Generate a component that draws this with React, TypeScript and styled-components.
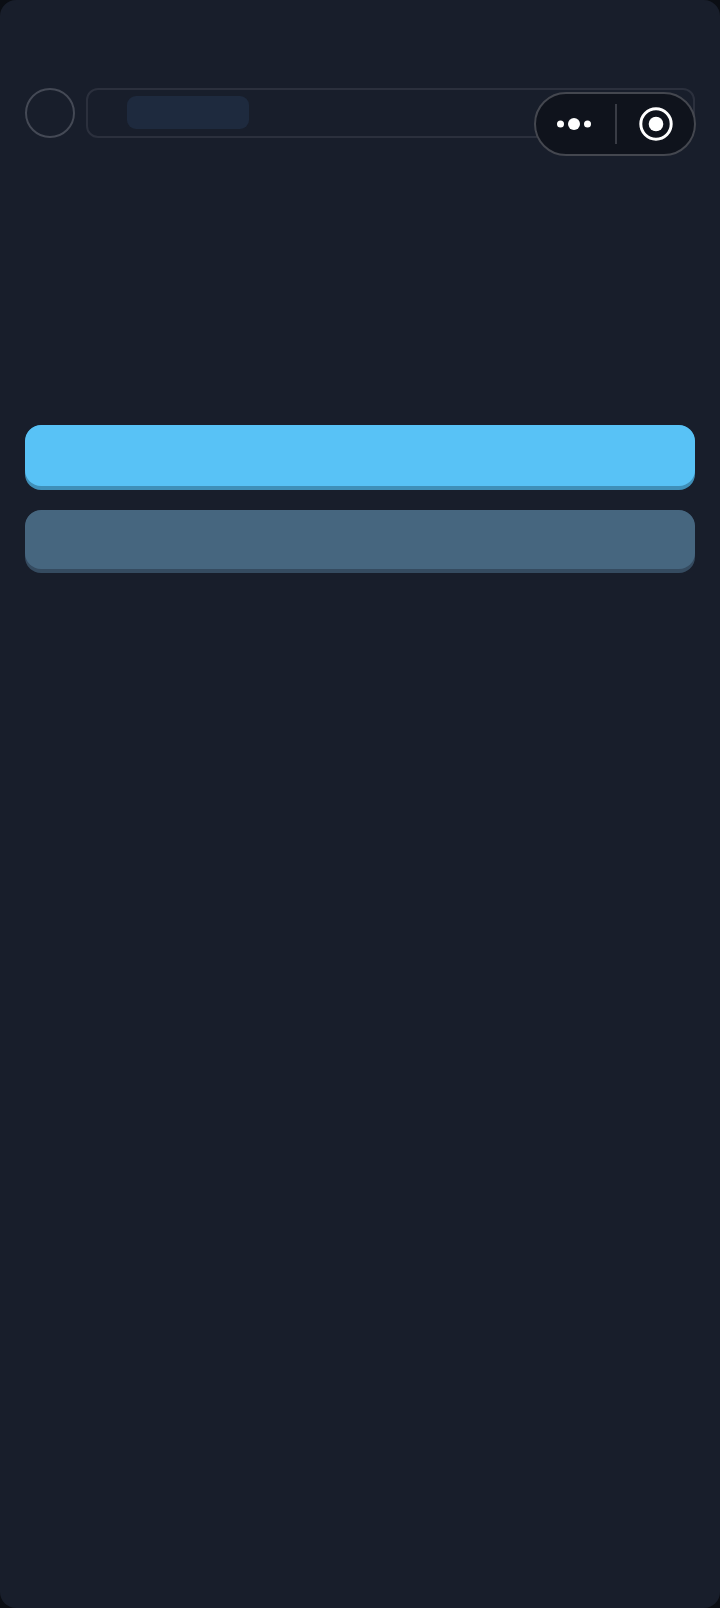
import React from "react";
import styled, { createGlobalStyle } from "styled-components";

const Global = createGlobalStyle`
  html, body { margin: 0; padding: 0; background: #0b0e14; }
  #root { width: 720px; height: 1608px; }
`;

const Page = styled.div`
  position: relative;
  width: 720px;
  height: 1608px;
  box-sizing: border-box;
  padding: 88px 25px 0 25px;
  background: #181e2b;
  border-radius: 16px;
  overflow: hidden;
`;

const Header = styled.div`
  display: flex;
  gap: 11px;
  height: 50px;
`;

const Avatar = styled.div`
  flex: none;
  box-sizing: border-box;
  width: 50px;
  height: 50px;
  border-radius: 50%;
  border: 2px solid #444955;
`;

const SearchBar = styled.div`
  flex: 1;
  box-sizing: border-box;
  height: 50px;
  padding: 6px 0 0 39px;
  border: 2px solid #2b303d;
  border-radius: 12px;
`;

const Chip = styled.div`
  width: 122px;
  height: 33px;
  border-radius: 9px;
  background: #1e2a3e;
`;

const Capsule = styled.div`
  position: absolute;
  top: 92px;
  left: 534px;
  box-sizing: border-box;
  width: 162px;
  height: 64px;
  display: flex;
  align-items: center;
  background: #0f131c;
  border: 2px solid #44474f;
  border-radius: 32px;
`;

const MenuSide = styled.div`
  flex: 1;
  display: flex;
  align-items: center;
  justify-content: center;
  padding-right: 3px;
`;

const CloseSide = styled.div`
  flex: 1;
  display: flex;
  align-items: center;
  justify-content: center;
  padding-left: 2px;
`;

const Divider = styled.div`
  flex: none;
  width: 2px;
  height: 40px;
  background: #393c45;
`;

const Buttons = styled.div`
  display: flex;
  flex-direction: column;
  gap: 20px;
  margin-top: 287px;
`;

const ActionButton = styled.div<{ $height: number; $face: string; $edge: string }>`
  position: relative;
  box-sizing: border-box;
  height: ${(p) => p.$height}px;
  border-radius: 16px;
  background: ${(p) => p.$edge};
  overflow: hidden;

  &::before {
    content: "";
    position: absolute;
    inset: 0 0 4px 0;
    border-radius: 16px;
    background: ${(p) => p.$face};
  }
`;

export default function App() {
  return (
    <>
      <Global />
      <Page>
        <Header>
          <Avatar />
          <SearchBar>
            <Chip />
          </SearchBar>
        </Header>
        <Buttons>
          <ActionButton $height={65} $face="#58c2f6" $edge="#3f8fb8" />
          <ActionButton $height={63} $face="#46667f" $edge="#354b60" />
        </Buttons>
        <Capsule>
          <MenuSide>
            <svg width="36" height="14" viewBox="0 0 36 14">
              <circle cx="4.5" cy="7" r="3.5" fill="#fff" />
              <circle cx="18" cy="7" r="6" fill="#fff" />
              <circle cx="31.5" cy="7" r="3.5" fill="#fff" />
            </svg>
          </MenuSide>
          <Divider />
          <CloseSide>
            <svg width="34" height="34" viewBox="0 0 34 34">
              <circle cx="17" cy="17" r="15.2" fill="none" stroke="#fff" strokeWidth="3" />
              <circle cx="17" cy="17" r="7.3" fill="#fff" />
            </svg>
          </CloseSide>
        </Capsule>
      </Page>
    </>
  );
}
